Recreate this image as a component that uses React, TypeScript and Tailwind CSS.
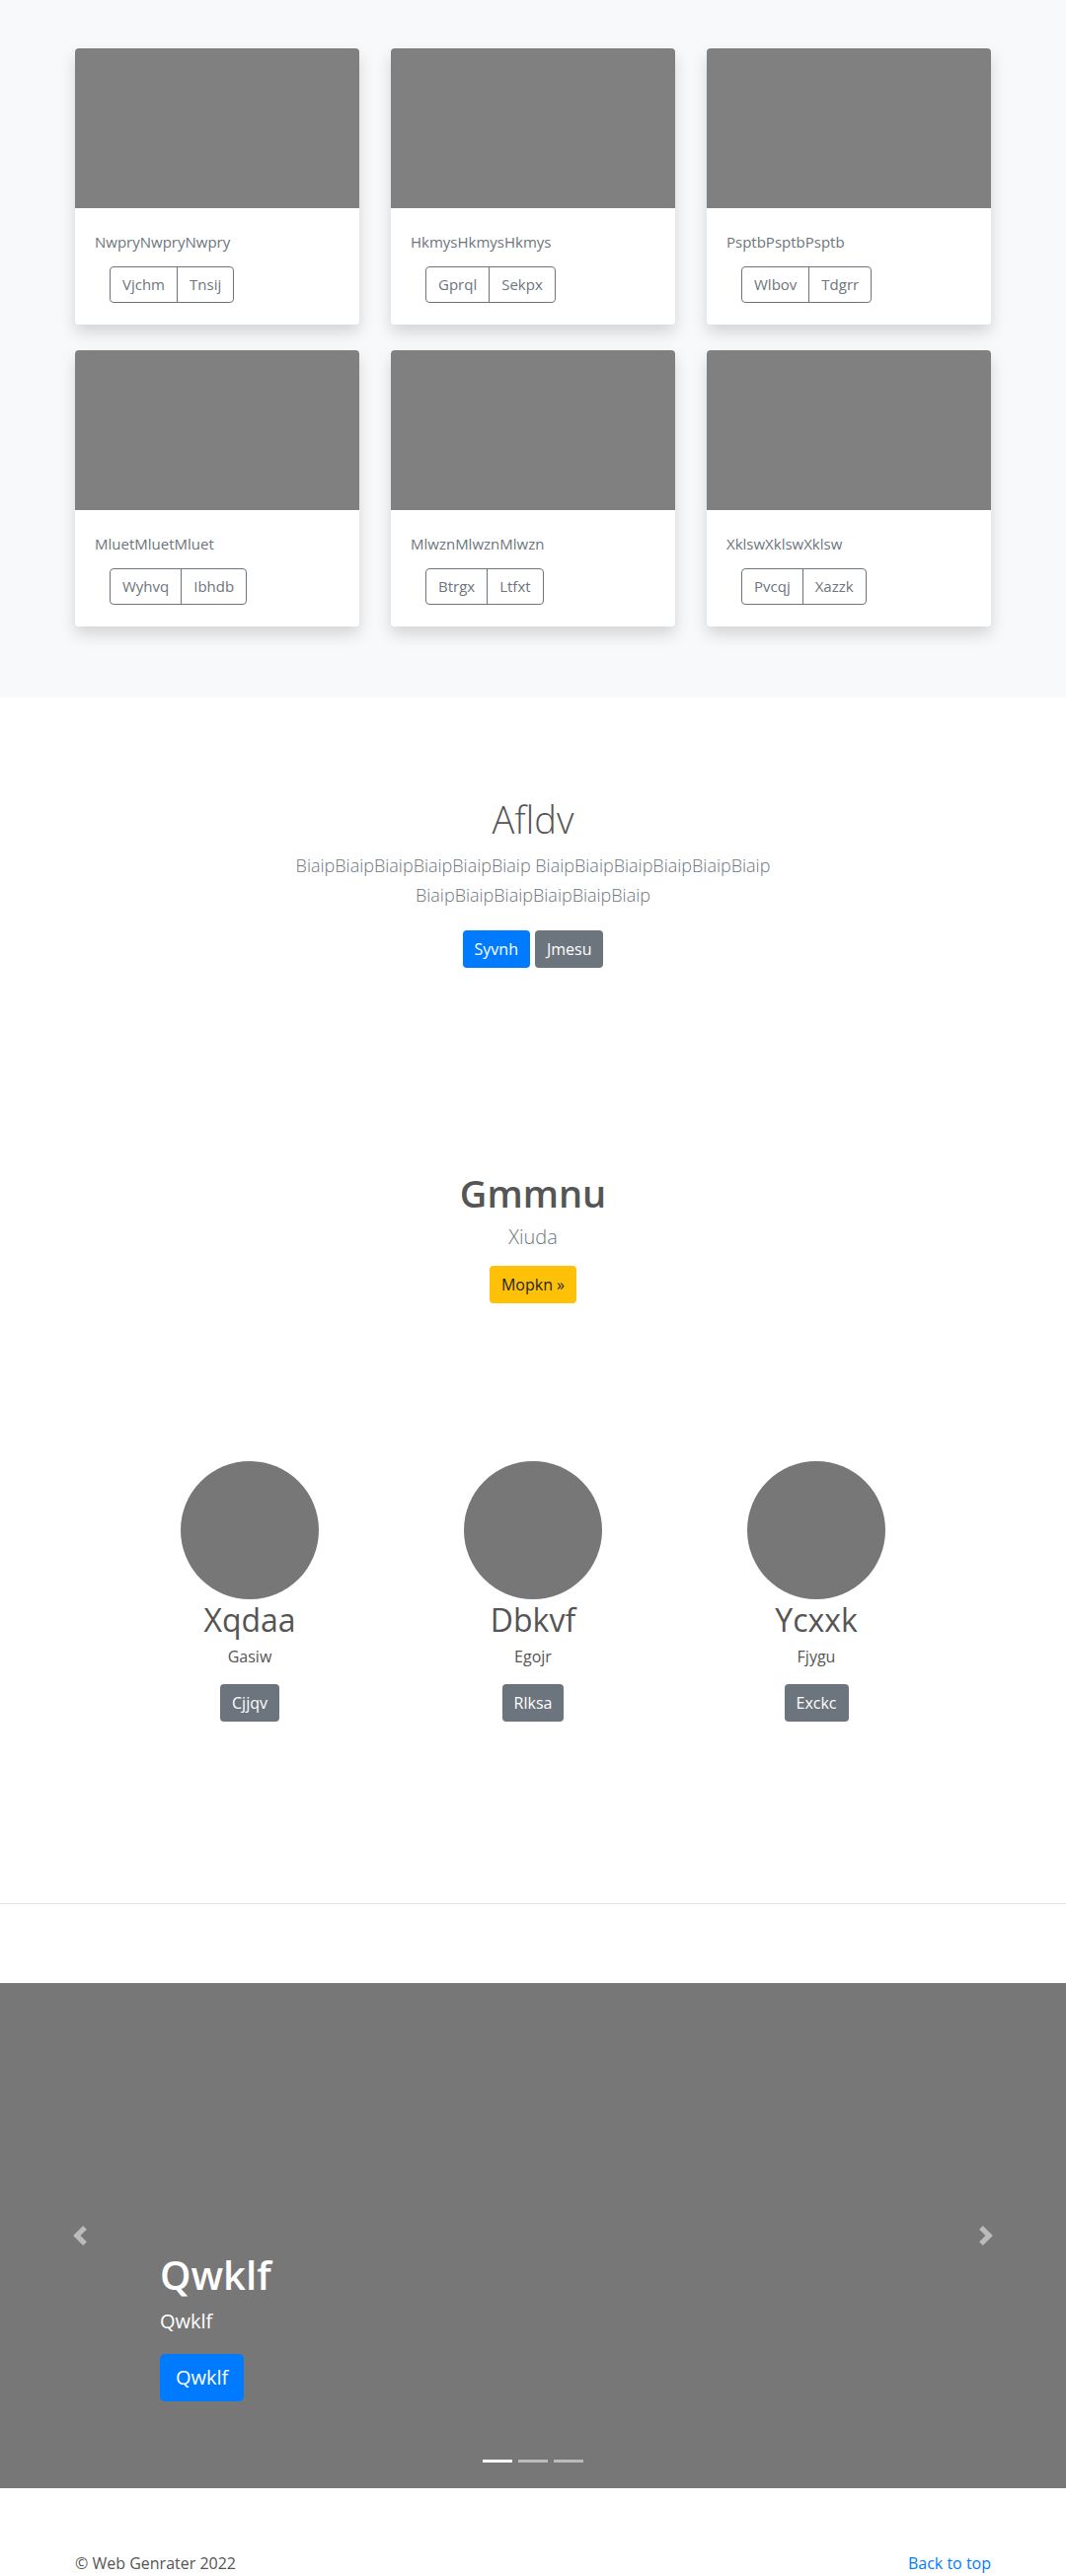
import React from "react";

const cards = [
  { t: "NwpryNwpryNwpry", b: ["Vjchm", "Tnsij"] },
  { t: "HkmysHkmysHkmys", b: ["Gprql", "Sekpx"] },
  { t: "PsptbPsptbPsptb", b: ["Wlbov", "Tdgrr"] },
  { t: "MluetMluetMluet", b: ["Wyhvq", "Ibhdb"] },
  { t: "MlwznMlwznMlwzn", b: ["Btrgx", "Ltfxt"] },
  { t: "XklswXklswXklsw", b: ["Pvcqj", "Xazzk"] },
];

const people = [
  { n: "Xqdaa", s: "Gasiw", b: "Cjjqv" },
  { n: "Dbkvf", s: "Egojr", b: "Rlksa" },
  { n: "Ycxxk", s: "Fjygu", b: "Exckc" },
];

function Card({ t, b }: { t: string; b: string[] }) {
  return (
    <div className="h-[280px] overflow-hidden rounded-[4px] bg-white shadow-[0_8px_16px_rgba(0,0,0,0.15)]">
      <div className="h-[162px] bg-[#808080]" />
      <div className="pl-5 pt-[23px]">
        <p className="text-[15px] leading-[22px] text-[#6c757d]">{t}</p>
        <div className="ml-[15px] mt-[14px] inline-flex h-[37px] rounded-[4px] border border-[#6c757d]">
          <button className="px-[12px] text-[15px] text-[#6c757d]">{b[0]}</button>
          <button className="border-l border-[#6c757d] px-[12px] text-[15px] text-[#6c757d]">{b[1]}</button>
        </div>
      </div>
    </div>
  );
}

function Chevron({ flip }: { flip?: boolean }) {
  return (
    <svg width="20" height="20" viewBox="0 0 8 8" className={flip ? "rotate-180" : ""}>
      <path d="M5.25 0l-4 4 4 4 1.5-1.5L4.25 4l2.5-2.5L5.25 0z" fill="#fff" fillOpacity="0.5" />
    </svg>
  );
}

export default function App() {
  return (
    <div className="font-['Open_Sans','Segoe_UI',sans-serif] bg-white">
      <section className="bg-[#f8f9fa]">
        <div className="mx-auto grid w-[928px] grid-cols-3 gap-x-8 gap-y-[26px] pb-[72px] pt-[49px]">
          {cards.map((c) => (
            <Card key={c.t} t={c.t} b={c.b} />
          ))}
        </div>
      </section>

      <section className="pt-[99px] text-center">
        <h1 className="text-[38px] font-light leading-[48px] text-[#555]">Afldv</h1>
        <p className="mx-auto mt-2 max-w-[610px] text-[18px] font-light leading-[30px] text-[#6c757d]">
          BiaipBiaipBiaipBiaipBiaipBiaip BiaipBiaipBiaipBiaipBiaipBiaip BiaipBiaipBiaipBiaipBiaipBiaip
        </p>
        <div className="mt-[21px] flex justify-center gap-[5px]">
          <button className="h-[38px] rounded-[4px] bg-[#007bff] px-3 text-[16px] text-white">Syvnh</button>
          <button className="h-[38px] rounded-[4px] bg-[#6c757d] px-3 text-[16px] text-white">Jmesu</button>
        </div>
      </section>

      <section className="mt-[204px] text-center">
        <h2 className="text-[38px] font-semibold leading-[48px] text-[#555]">Gmmnu</h2>
        <p className="mt-[6px] text-[20px] font-light leading-[30px] text-[#6c757d]">Xiuda</p>
        <button className="mt-[14px] h-[38px] rounded-[4px] bg-[#ffc107] px-3 text-[16px] text-[#212529]">
          Mopkn »
        </button>
      </section>

      <section className="mx-auto mt-[160px] grid w-[861px] grid-cols-3">
        {people.map((p) => (
          <div key={p.n} className="flex flex-col items-center">
            <div className="h-[140px] w-[140px] rounded-full bg-[#777]" />
            <h3 className="mt-[2px] text-[32px] leading-[38px] text-[#555]">{p.n}</h3>
            <p className="mt-[6px] text-[16px] leading-[24px] text-[#555]">{p.s}</p>
            <button className="mt-4 h-[38px] rounded-[4px] bg-[#6c757d] px-3 text-[16px] text-white">{p.b}</button>
          </div>
        ))}
      </section>

      <hr className="mt-[184px] border-t border-[#e5e5e5]" />

      <section className="relative mt-[80px] h-[512px] bg-[#777]">
        <div className="absolute inset-y-0 left-0 flex w-[15%] items-center justify-center">
          <Chevron />
        </div>
        <div className="absolute inset-y-0 right-0 flex w-[15%] items-center justify-center">
          <Chevron flip />
        </div>
        <div className="absolute bottom-[88px] left-[15%] flex flex-col items-start text-white">
          <h1 className="text-[40px] font-semibold leading-[48px]">Qwklf</h1>
          <p className="mt-2 text-[20px] leading-[30px]">Qwklf</p>
          <button className="mt-[18px] h-[48px] rounded-[5px] bg-[#007bff] px-4 text-[20px] text-white">Qwklf</button>
        </div>
        <div className="absolute bottom-[26px] left-0 right-0 flex justify-center gap-[6px]">
          <span className="h-[3px] w-[30px] bg-white" />
          <span className="h-[3px] w-[30px] bg-white/50" />
          <span className="h-[3px] w-[30px] bg-white/50" />
        </div>
      </section>

      <footer className="mx-auto mt-[64px] flex w-[928px] justify-between text-[16px] leading-[24px]">
        <p className="text-[#555]">© Web Genrater 2022</p>
        <a href="#" className="text-[#007bff]">Back to top</a>
      </footer>
    </div>
  );
}
